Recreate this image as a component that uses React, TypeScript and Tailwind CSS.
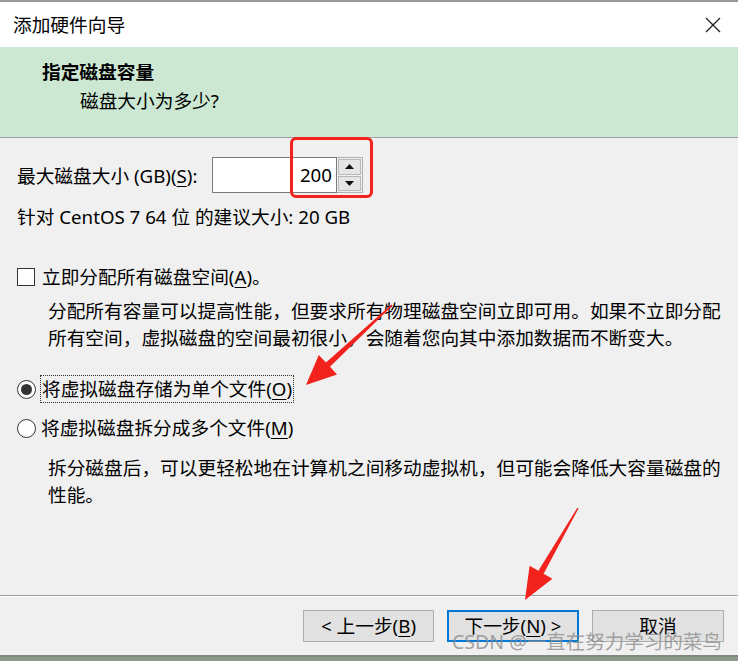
import React from 'react';

const U: React.FC<{ children: React.ReactNode }> = ({ children }) => (
  <span className="underline underline-offset-[3px] decoration-1">{children}</span>
);

export default function App() {
  return (
    <div className="relative w-[738px] h-[661px] flex flex-col overflow-hidden bg-[#f0f0f0] text-black text-[18.7px] leading-[26px] font-['Noto_Sans','Noto_Sans_CJK_SC',sans-serif]">
      <div className="h-[2px] bg-[#9a9a9a]"></div>

      {/* title bar */}
      <div className="h-[45px] bg-white flex items-center justify-between pl-[13px] pr-[17px]">
        <span>添加硬件向导</span>
        <svg width="16" height="16" viewBox="0 0 16 16" className="text-[#222]">
          <path d="M1 1 L15 15 M15 1 L1 15" stroke="currentColor" strokeWidth="1.3" />
        </svg>
      </div>

      {/* header */}
      <div className="h-[91px] bg-[#cce8d2] border-b border-[#a0a0a0] pl-[42px] pt-[12px]">
        <div className="font-bold">指定磁盘容量</div>
        <div className="mt-[3px] ml-[38px]">磁盘大小为多少?</div>
      </div>

      {/* body */}
      <div className="flex-1 px-[17px] pt-[20px]">
        <div className="flex items-center h-[36px]">
          <span>最大磁盘大小 (GB)(<U>S</U>):</span>
        </div>
        <div className="mt-[10px]">针对 CentOS 7 64 位 的建议大小: 20 GB</div>

        <div className="mt-[34px] flex items-center">
          <div className="w-[18px] h-[18px] border border-[#333] bg-white"></div>
          <span className="ml-[7px]">立即分配所有磁盘空间(<U>A</U>)。</span>
        </div>
        <div className="mt-[7px] ml-[31px] leading-[27px]">
          分配所有容量可以提高性能，但要求所有物理磁盘空间立即可用。如果不立即分配
          <br />
          所有空间，虚拟磁盘的空间最初很小，会随着您向其中添加数据而不断变大。
        </div>

        <div className="mt-[24px] flex items-center">
          <div className="w-[19px] h-[19px] rounded-full border border-[#333] bg-white flex items-center justify-center">
            <div className="w-[11px] h-[11px] rounded-full bg-[#333]"></div>
          </div>
          <span className="ml-[4px] px-[1px] border border-dotted border-[#333]">
            将虚拟磁盘存储为单个文件(<U>O</U>)
          </span>
        </div>
        <div className="mt-[12px] flex items-center">
          <div className="w-[19px] h-[19px] rounded-full border border-[#333] bg-white"></div>
          <span className="ml-[5px]">将虚拟磁盘拆分成多个文件(<U>M</U>)</span>
        </div>
        <div className="mt-[13px] ml-[31px] leading-[27px]">
          拆分磁盘后，可以更轻松地在计算机之间移动虚拟机，但可能会降低大容量磁盘的
          <br />
          性能。
        </div>
      </div>

      {/* footer */}
      <div className="h-[60px] border-t border-[#a0a0a0]">
        <div className="h-px bg-white"></div>
        <div className="flex justify-end gap-[13px] pr-[14px] pt-[13px]">
          <button className="w-[131px] h-[32px] bg-[#e1e1e1] border border-[#adadad]">
            &lt; 上一步(<U>B</U>)
          </button>
          <button className="w-[132px] h-[32px] bg-[#e1e1e1] border-2 border-[#0078d7]">
            下一步(<U>N</U>) &gt;
          </button>
          <button className="w-[132px] h-[32px] bg-[#e1e1e1] border border-[#adadad]">取消</button>
        </div>
      </div>
      <div className="h-[6px] bg-[#8d9a8c] border-t-2 border-[#7d8a7c]"></div>

      {/* disk size spinner */}
      <div className="absolute left-[212px] top-[157px] flex">
        <div className="w-[125px] h-[36px] bg-white border border-[#7a7a7a] flex items-center justify-end pr-[4px]">
          200
        </div>
        <div className="w-[26px] h-[36px] flex flex-col bg-[#f0f0f0] border border-[#b0b0b0] border-l-0">
          <div className="flex-1 m-px bg-[#e5e5e5] border border-[#b8b8b8] flex items-center justify-center">
            <svg width="9" height="5" viewBox="0 0 9 5"><path d="M0 5 L4.5 0 L9 5 Z" fill="#111" /></svg>
          </div>
          <div className="flex-1 m-px mt-0 bg-[#e5e5e5] border border-[#b8b8b8] flex items-center justify-center">
            <svg width="9" height="5" viewBox="0 0 9 5"><path d="M0 0 L4.5 5 L9 0 Z" fill="#111" /></svg>
          </div>
        </div>
      </div>

      {/* red highlight box */}
      <div className="absolute left-[290px] top-[137px] w-[83px] h-[61px] border-[3px] border-[#f2231c] rounded-[6px]"></div>

      {/* red arrows */}
      <svg className="absolute left-0 top-0 pointer-events-none" width="738" height="661">
        <polygon
          points="392.6,305.4 330,366.8 337,374.4 306,385 318.8,355 326,362.4 391.4,304.6"
          fill="#f2231c"
        />
        <polygon
          points="578.6,508.3 543.6,573.8 552.4,578.8 525,600 529.6,565.8 538.4,570.8 577.4,507.7"
          fill="#f2231c"
        />
      </svg>

      {/* watermark */}
      <div className="absolute left-[452px] top-[629px] text-[19.5px] leading-[26px] text-[#8c8c8c]/80 whitespace-nowrap">
        CSDN @一直在努力学习的菜鸟
      </div>
    </div>
  );
}
